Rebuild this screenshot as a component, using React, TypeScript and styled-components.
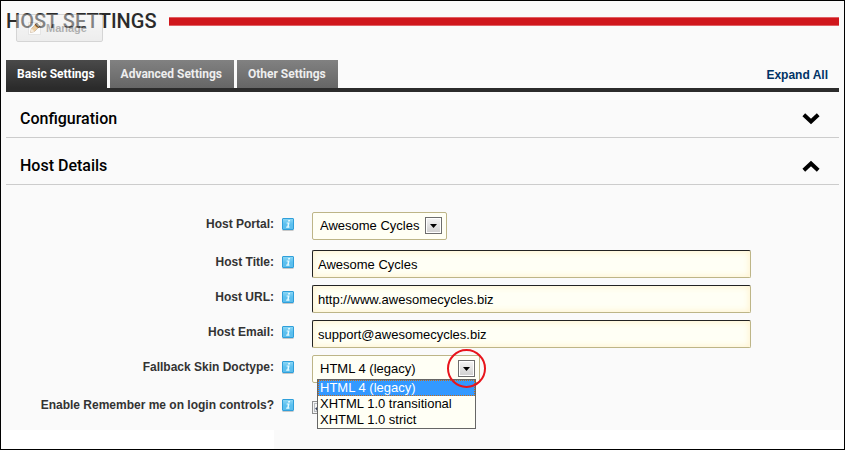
import React, { useState } from "react";
import styled, { createGlobalStyle } from "styled-components";

const GlobalStyle = createGlobalStyle`
  *, *::before, *::after { box-sizing: border-box; }
  body { margin: 0; background: #fafafa; }
`;

const Page = styled.div`
  display: flex;
  flex-direction: column;
  min-height: 100vh;
  border: 1px solid #000;
  background: #fafafa;
  color: #333;
  font-family: "Liberation Sans", Arial, sans-serif;
  font-size: 12px;
`;

const Content = styled.main`
  flex: 1;
  padding: 5px 5px 0;
`;

const TitleBar = styled.header`
  position: relative;
  display: flex;
  align-items: center;
  gap: 12px;
  height: 30px;
  margin-bottom: 24px;
`;

const Title = styled.h1`
  margin: 0;
  color: #2b2b2b;
  font: 500 20px/30px Roboto, sans-serif;
  white-space: nowrap;
`;

const TitleRule = styled.div`
  flex: 1;
  height: 9px;
  border: 1px solid #e06064;
  border-width: 1px 0;
  background: #d0171c;
`;

const ManageButton = styled.button`
  position: absolute;
  top: 8px;
  left: 10px;
  display: flex;
  align-items: center;
  gap: 4px;
  height: 28px;
  padding: 0 15px 0 11px;
  border: 1px solid #aaa;
  border-radius: 2px;
  background: linear-gradient(#f4f4f4, #dedede);
  color: #555;
  font: bold 11px/14px "Liberation Sans", Arial, sans-serif;
  opacity: 0.45;
`;

const TabBar = styled.nav`
  display: flex;
  align-items: stretch;
  gap: 3px;
  border-bottom: 4px solid #2b2b2b;
`;

const Tab = styled.button<{ $active: boolean }>`
  height: 28px;
  padding: 0 12px 0 11px;
  border: 0;
  background: ${(p) => (p.$active ? "linear-gradient(#4a4a4a, #2b2b2b)" : "linear-gradient(#818181, #666)")};
  color: ${(p) => (p.$active ? "#fff" : "#eee")};
  font: bold 12px/28px Roboto, sans-serif;
`;

const ExpandLink = styled.a`
  margin-left: auto;
  padding: 2px 11px 0 0;
  color: #003366;
  font-weight: bold;
  line-height: 26px;
  text-decoration: none;
`;

const Sections = styled.div`
  display: flex;
  flex-direction: column;
  gap: 1px;
`;

const SectionToggle = styled.button`
  display: flex;
  align-items: center;
  justify-content: space-between;
  width: 100%;
  height: 46px;
  padding: 9px 19px 0 14px;
  border: 0;
  border-bottom: 1px solid #ccc;
  background: none;
  color: #000;
  font: 500 16px/24px Roboto, sans-serif;
`;

const SectionHeading = styled.h2`
  display: flex;
  margin: 0;
`;

const Form = styled.form`
  display: flex;
  flex-direction: column;
  gap: 7px;
  padding-top: 27px;
`;

const Row = styled.div<{ $spaced?: boolean }>`
  display: grid;
  grid-template-columns: 268px 14px minmax(0, 439px);
  column-gap: 12px;
  align-items: center;
  min-height: 28px;
  margin-bottom: ${(p) => (p.$spaced ? "3px" : "0")};
`;

const FieldLabel = styled.label`
  padding-bottom: 4px;
  color: #333;
  font-weight: bold;
  line-height: 16px;
  text-align: right;
`;

const HelpButton = styled.button`
  display: flex;
  margin-left: -5px;
  padding: 0 0 4px;
  border: 0;
  background: none;
`;

const TextInput = styled.input`
  width: 100%;
  height: 28px;
  padding: 0 5px;
  border: 1px solid #bdb587;
  border-top-color: #222;
  border-left-color: #222;
  border-radius: 2px;
  background: #fffff5;
  box-shadow: inset 0 0 6px 1px #fff3cf;
  color: #000;
  font: 13px/18px "Liberation Sans", Arial, sans-serif;
`;

const SelectFrame = styled.div<{ $width: number }>`
  position: relative;
  width: ${(p) => p.$width}px;
  height: 28px;
`;

const Select = styled.select`
  width: 100%;
  height: 100%;
  padding: 0 24px 0 7px;
  border: 1px solid #bdb587;
  border-radius: 2px;
  appearance: none;
  background: #fffff5;
  color: #000;
  font: 13px/18px "Liberation Sans", Arial, sans-serif;
`;

const Arrow = styled.span`
  position: absolute;
  top: 5px;
  right: 5px;
  display: flex;
  align-items: center;
  justify-content: center;
  width: 17px;
  height: 17px;
  border: 1px solid #6d6d6d;
  background: linear-gradient(#f5f5f5, #cfcfcf);
  box-shadow: inset 0 0 0 1px #fff;
  pointer-events: none;
`;

const Options = styled.ul`
  position: absolute;
  z-index: 1;
  top: 24px;
  left: 5px;
  width: 159px;
  margin: 0;
  padding: 0;
  border: 1px solid #666;
  background: #fffff5;
  list-style: none;
`;

const Option = styled.li<{ $selected: boolean }>`
  padding: 0 2px;
  outline: ${(p) => (p.$selected ? "1px dotted #c76b16" : "none")};
  outline-offset: -1px;
  background: ${(p) => (p.$selected ? "#3399ff" : "transparent")};
  color: ${(p) => (p.$selected ? "#fff" : "#000")};
  font-size: 13px;
  line-height: 16px;
`;

const Ring = styled.span`
  position: absolute;
  z-index: 2;
  top: -6px;
  right: -6px;
  width: 39px;
  height: 39px;
  border: 2px solid #e8141c;
  border-radius: 50%;
  pointer-events: none;
`;

const Checkbox = styled.input`
  display: grid;
  place-content: center;
  width: 13px;
  height: 13px;
  margin: 0;
  border: 1px solid #8e8f8f;
  appearance: none;
  background: #f4f4f4;
  box-shadow: inset 0 0 0 1px #f4f4f4, inset 0 0 0 2px #b8bcc0;
  &:checked::before {
    content: "";
    width: 4px;
    height: 7px;
    border: solid #34405e;
    border-width: 0 2px 2px 0;
    rotate: 45deg;
  }
`;

const FooterStrip = styled.footer`
  display: grid;
  grid-template-columns: 273px 236px 1fr;
  height: 19px;
`;

const FooterCell = styled.div`
  background: #fff;
`;

const PencilIcon = () => (
  <svg width="14" height="14" viewBox="0 0 14 14" aria-hidden="true">
    <rect x="0.5" y="1.5" width="12" height="12" fill="#fff" stroke="#ccc" />
    <path d="M2.500 11.500l1-4L9 2l3 3-5.500 5.500z" fill="#dd9a3a" stroke="#8a6034" strokeWidth=".8" />
    <path d="M2.500 11.500l1-4 3 3z" fill="#f6ddb8" />
    <path d="M8 3l3 3" stroke="#fff" />
  </svg>
);

const InfoIcon = () => (
  <svg width="14" height="15" viewBox="0 0 14 15" aria-hidden="true">
    <defs>
      <linearGradient id="info" x1="0" y1="0" x2="0" y2="1">
        <stop offset="0" stopColor="#8fd8f5" />
        <stop offset=".5" stopColor="#5cc0ef" />
        <stop offset="1" stopColor="#5bbdec" />
      </linearGradient>
    </defs>
    <path d="M1 13h12l-1 1H2z" fill="#c8c8c8" />
    <rect x="1.5" y="1.500" width="11" height="11" rx=".5" fill="url(#info)" stroke="#2f9fda" />
    <path d="M7.300 3h1.800l-.3 1.500H7zM5.700 5.400h2.900L7.800 9.500h.8l-.2 1.200H5.100l.2-1.200h1l.5-2.900H5.500z" fill="#e8fbff" />
  </svg>
);

const Chevron = ({ up }: { up?: boolean }) => (
  <svg width="18" height="14" viewBox="0 0 18 14" aria-hidden="true">
    <path d={up ? "M1.800 11.200L9 4.500l7.200 6.700" : "M1.800 2.800L9 9.500l7.200-6.700"} fill="none" stroke="#000" strokeWidth="4" />
  </svg>
);

const Triangle = () => (
  <svg width="7" height="4" viewBox="0 0 7 4" aria-hidden="true">
    <path d="M0 0h7L3.500 4z" fill="#000" />
  </svg>
);

type FieldProps = { id: string; label: string; spaced?: boolean; children: React.ReactNode };

const Field = ({ id, label, spaced, children }: FieldProps) => (
  <Row $spaced={spaced}>
    <FieldLabel htmlFor={id}>{label}</FieldLabel>
    <HelpButton type="button" aria-label={`Help: ${label}`}>
      <InfoIcon />
    </HelpButton>
    {children}
  </Row>
);

const tabs = ["Basic Settings", "Advanced Settings", "Other Settings"];
const doctypes = ["HTML 4 (legacy)", "XHTML 1.0 transitional", "XHTML 1.0 strict"];

export default function App() {
  const [tab, setTab] = useState(tabs[0]);
  const [doctype, setDoctype] = useState(doctypes[0]);
  return (
    <>
      <GlobalStyle />
      <Page>
        <Content>
          <TitleBar>
            <Title>HOST SETTINGS</Title>
            <TitleRule />
            <ManageButton type="button">
              <PencilIcon />
              Manage
            </ManageButton>
          </TitleBar>
          <TabBar>
            {tabs.map((name) => (
              <Tab key={name} type="button" $active={name === tab} onClick={() => setTab(name)}>
                {name}
              </Tab>
            ))}
            <ExpandLink href="#expand">Expand All</ExpandLink>
          </TabBar>
          <Sections>
            <SectionHeading>
              <SectionToggle type="button" aria-expanded={false}>
                Configuration
                <Chevron />
              </SectionToggle>
            </SectionHeading>
            <SectionHeading>
              <SectionToggle type="button" aria-expanded>
                Host Details
                <Chevron up />
              </SectionToggle>
            </SectionHeading>
          </Sections>
          <Form>
            <Field id="portal" label="Host Portal:" spaced>
              <SelectFrame $width={135}>
                <Select id="portal">
                  <option>Awesome Cycles</option>
                </Select>
                <Arrow>
                  <Triangle />
                </Arrow>
              </SelectFrame>
            </Field>
            <Field id="title" label="Host Title:">
              <TextInput id="title" defaultValue="Awesome Cycles" />
            </Field>
            <Field id="url" label="Host URL:">
              <TextInput id="url" defaultValue="http://www.awesomecycles.biz" />
            </Field>
            <Field id="email" label="Host Email:">
              <TextInput id="email" defaultValue="support@awesomecycles.biz" />
            </Field>
            <Field id="doctype" label="Fallback Skin Doctype:" spaced>
              <SelectFrame $width={168}>
                <Select id="doctype" value={doctype} onChange={(e) => setDoctype(e.target.value)}>
                  {doctypes.map((name) => (
                    <option key={name}>{name}</option>
                  ))}
                </Select>
                <Arrow>
                  <Triangle />
                </Arrow>
                <Options role="listbox" aria-label="Fallback Skin Doctype">
                  {doctypes.map((name) => (
                    <Option
                      key={name}
                      role="option"
                      aria-selected={name === doctype}
                      $selected={name === doctype}
                      onClick={() => setDoctype(name)}
                    >
                      {name}
                    </Option>
                  ))}
                </Options>
                <Ring />
              </SelectFrame>
            </Field>
            <Field id="remember" label="Enable Remember me on login controls?">
              <Checkbox id="remember" type="checkbox" defaultChecked />
            </Field>
          </Form>
        </Content>
        <FooterStrip>
          <FooterCell />
          <span />
          <FooterCell />
        </FooterStrip>
      </Page>
    </>
  );
}
